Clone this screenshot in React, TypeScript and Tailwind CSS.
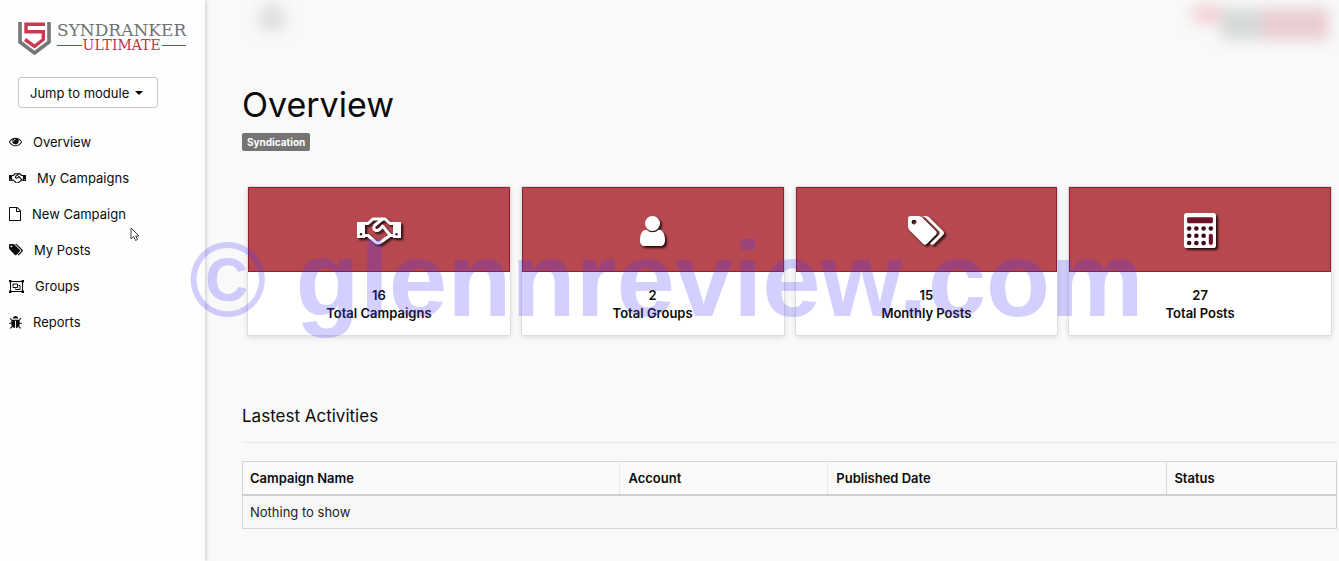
import type { ReactNode } from "react";

type IconProps = { className?: string };

function EyeIcon({ className }: IconProps) {
  return (
    <svg viewBox="0 128 1792 1536" fill="currentColor" className={className} aria-hidden>
      <path d="M1664 960q-152-236-381-353 61 104 61 225 0 185-131.5 316.5t-316.5 131.5-316.5-131.5-131.5-316.5q0-121 61-225-229 117-381 353 133 205 333.5 326.5t434.5 121.5 434.5-121.5 333.5-326.5zm-720-384q0-20-14-34t-34-14q-125 0-214.5 89.5t-89.5 214.5q0 20 14 34t34 14 34-14 14-34q0-86 61-147t147-61q20 0 34-14t14-34zm848 384q0 34-20 69-140 230-376.5 368.5t-499.5 138.5-499.5-139-376.5-368q-20-35-20-69t20-69q140-229 376.5-368t499.5-139 499.5 139 376.5 368q20 35 20 69z" />
    </svg>
  );
}

function HandshakeIcon({ className }: IconProps) {
  return (
    <svg
      viewBox="0 0 44 28"
      fill="none"
      stroke="currentColor"
      strokeWidth="3"
      strokeLinejoin="round"
      strokeLinecap="round"
      className={className}
      aria-hidden
    >
      <path
        d="M0 5h8v16H0zM36 5h8v16h-8zM4 16a1.300 1.300 0 1 0 0 2.600 1.300 1.300 0 0 0 0-2.600zM39.500 16a1.300 1.300 0 1 0 0 2.600 1.300 1.300 0 0 0 0-2.600z"
        fill="currentColor"
        fillRule="evenodd"
        stroke="none"
      />
      <path d="M8 6.500h3L16 2h12l5 4.500h3M8 18.500h3l7.500 6.500q2.500 1.800 5 .2L33 18.500h3" />
      <path d="M25 2.500L17.500 8.500q-2 3.500 1.500 5 3.500.5 6.500-4.500L33 18" />
    </svg>
  );
}

function FileIcon({ className }: IconProps) {
  return (
    <svg viewBox="128 0 1536 1792" fill="currentColor" className={className} aria-hidden>
      <path d="M1596 380q28 28 48 76t20 88v1152q0 40-28 68t-68 28h-1344q-40 0-68-28t-28-68v-1600q0-40 28-68t68-28h896q40 0 88 20t76 48zm-444-244v376h376q-10-29-22-41l-313-313q-12-12-41-22zm384 1528v-1024h-416q-40 0-68-28t-28-68v-416h-768v1536h1280z" />
    </svg>
  );
}

function TagsIcon({ className }: IconProps) {
  return (
    <svg viewBox="0 128 1900 1516" fill="currentColor" className={className} aria-hidden>
      <path d="M448 448q0-53-37.5-90.5t-90.5-37.5-90.5 37.5-37.5 90.5 37.5 90.5 90.5 37.5 90.5-37.5 37.5-90.5zm1067 576q0 53-37 90l-491 492q-39 37-91 37-53 0-90-37l-715-716q-38-37-64.5-101t-26.5-117v-416q0-52 38-90t90-38h416q53 0 117 26.5t102 64.5l715 714q37 39 37 91zm384 0q0 53-37 90l-491 492q-39 37-91 37-36 0-59-14t-53-45l470-470q37-37 37-90 0-52-37-91l-715-714q-38-38-102-64.5t-117-26.5h224q53 0 117 26.5t102 64.5l715 714q37 39 37 91z" />
    </svg>
  );
}

function GroupIcon({ className }: IconProps) {
  return (
    <svg viewBox="0 0 15 13" fill="none" stroke="currentColor" className={className} aria-hidden>
      <path d="M1.500 1.500h12v10h-12z" />
      <path d="M4 4h4.500v3.500H4zM9.500 5.500H11v4H6.500V8.500" />
      <path
        d="M0 0h2.500v2.500H0zM12.500 0H15v2.500h-2.500zM0 10.500h2.500V13H0zM12.500 10.500H15V13h-2.500z"
        fill="currentColor"
        stroke="none"
      />
    </svg>
  );
}

function BugIcon({ className }: IconProps) {
  return (
    <svg viewBox="96 64 1600 1600" fill="currentColor" className={className} aria-hidden>
      <path d="M1696 960q0 26-19 45t-45 19h-224q0 171-67 290l208 209q19 19 19 45t-19 45q-18 19-45 19t-45-19l-198-197q-5 5-15 13t-42 28.500-65 36.500-82 29-97 13v-896h-128v896q-51 0-101.500-13.500t-87-33-66-39-43.500-32.500l-15-14-183 207q-20 21-48 21-24 0-43-16-19-18-20.500-44.500t15.500-46.500l202-227q-58-114-58-274h-224q-26 0-45-19t-19-45 19-45 45-19h224v-294l-173-173q-19-19-19-45t19-45 45-19 45 19l173 173h844l173-173q19-19 45-19t45 19 19 45-19 45l-173 173v294h224q26 0 45 19t19 45zm-480-576h-640q0-133 93.500-226.500t226.500-93.500 226.500 93.500 93.500 226.500z" />
    </svg>
  );
}

function UserIcon({ className }: IconProps) {
  return (
    <svg viewBox="256 128 1280 1536" fill="currentColor" className={className} aria-hidden>
      <path d="M1536 1399q0 109-62.500 187t-150.500 78h-854q-88 0-150.500-78t-62.500-187q0-85 8.500-160.500t31.500-152 58.500-131 94-89 134.500-34.500q131 128 313 128t313-128q76 0 134.500 34.500t94 89 58.500 131 31.500 152 8.500 160.500zm-256-887q0 159-112.500 271.500t-271.500 112.500-271.500-112.500-112.500-271.500 112.500-271.500 271.500-112.500 271.500 112.500 112.500 271.500z" />
    </svg>
  );
}

function CalculatorIcon({ className }: IconProps) {
  const keys = [
    [5, 15], [12, 15], [19, 15], [26, 15],
    [5, 22], [12, 22], [19, 22],
    [5, 29], [12, 29], [19, 29],
  ];
  return (
    <svg viewBox="0 0 31 34" className={className} aria-hidden>
      <rect width="31" height="34" rx="2.500" fill="white" />
      <rect x="3" y="4" width="25" height="6" rx="1" fill="#6d1526" />
      {keys.map(([cx, cy]) => (
        <circle key={`${cx}-${cy}`} cx={cx} cy={cy} r="2.200" fill="#3a0a14" />
      ))}
      <rect x="24" y="20" width="4" height="11" rx="2" fill="#6d1526" />
    </svg>
  );
}

const navItems: { label: string; icon: ReactNode }[] = [
  { label: "Overview", icon: <EyeIcon className="w-[13px]" /> },
  { label: "My Campaigns", icon: <HandshakeIcon className="w-[17px]" /> },
  { label: "New Campaign", icon: <FileIcon className="w-3" /> },
  { label: "My Posts", icon: <TagsIcon className="w-[14px]" /> },
  { label: "Groups", icon: <GroupIcon className="w-[15px]" /> },
  { label: "Reports", icon: <BugIcon className="w-[13px]" /> },
];

const stats: { value: number; label: string; icon: ReactNode }[] = [
  { value: 16, label: "Total Campaigns", icon: <HandshakeIcon className="w-11" /> },
  { value: 2, label: "Total Groups", icon: <UserIcon className="w-[25px]" /> },
  { value: 15, label: "Monthly Posts", icon: <TagsIcon className="w-9" /> },
  { value: 27, label: "Total Posts", icon: <CalculatorIcon className="w-8" /> },
];

function Logo() {
  return (
    <a href="#" className="flex w-fit items-start gap-[6px]" aria-label="Syndranker Ultimate">
      <svg viewBox="0 0 33 33" className="h-[33px] w-[33px] shrink-0" fill="none" aria-hidden>
        <path d="M2 0v20l14.500 11L31 20V0" stroke="#75777a" strokeWidth="3.600" />
        <path
          d="M27 2.300H8v7.500h17.300v7.700l-8.800 6.800L7 17.500"
          stroke="#c43b52"
          strokeWidth="3.400"
        />
      </svg>
      <span className="flex flex-col font-['DejaVu_Serif',serif]">
        <span className="text-[17px] leading-[17px] text-[#707274]">SYNDRANKER</span>
        <span className="flex items-center gap-px text-[14px] leading-[13px] text-[#c0334b]">
          <span className="h-px flex-1 bg-[#c0334b]" />
          ULTIMATE
          <span className="h-px flex-1 bg-[#c0334b]" />
        </span>
      </span>
    </a>
  );
}

function Sidebar() {
  return (
    <aside className="z-10 w-[205px] shrink-0 bg-[#fefefe] shadow-[1px_0_4px_rgba(0,0,0,0.2)]">
      <div className="px-[18px] pt-[22px]">
        <Logo />
        <button
          type="button"
          className="mt-[22px] flex h-[31px] items-center gap-[6px] rounded-[3px] border border-[#c4c4c4] bg-white pr-[14px] pl-[11px] whitespace-nowrap"
        >
          Jump to module
          <span className="border-x-4 border-t-4 border-x-transparent border-t-black" />
        </button>
      </div>
      <nav className="mt-4 px-[9px]">
        {navItems.map((item) => (
          <a key={item.label} href="#" className="flex h-9 items-center gap-[11px]">
            {item.icon}
            {item.label}
          </a>
        ))}
      </nav>
    </aside>
  );
}

function StatCard({ value, label, icon }: { value: number; label: string; icon: ReactNode }) {
  return (
    <div className="overflow-hidden rounded-[2px] border border-[#dedede] bg-white text-center font-semibold shadow-[0_2px_5px_rgba(0,0,0,0.1)]">
      <div className="flex h-[85px] items-center justify-center border border-[#8f1f31] bg-[#b7484f] pt-[2px] text-white">
        <div className="drop-shadow-[2px_2px_1px_rgba(0,0,0,0.8)]">{icon}</div>
      </div>
      <div className="pt-[14px] pb-[13px] leading-[18px]">
        <p>{value}</p>
        <p>{label}</p>
      </div>
    </div>
  );
}

function TopBar() {
  return (
    <div className="flex h-10 items-start justify-between pt-1 pr-2 pl-4" aria-hidden>
      <div className="h-7 w-7 rounded-full bg-[#dedede] blur-[7px]" />
      <div className="flex blur-[7px]">
        <div className="h-5 w-7 bg-[#f3d3d8]" />
        <div className="mt-1 h-8 w-10 bg-[#d6dad9]" />
        <div className="mt-1 h-8 w-[68px] bg-[#e8cdd1]" />
      </div>
    </div>
  );
}

function Activities() {
  return (
    <section className="mt-[68px]">
      <h2 className="text-[17px] leading-6">Lastest Activities</h2>
      <hr className="mt-[14px] border-[#e8e8e8]" />
      <table className="mt-[18px] w-full table-fixed border-collapse border border-[#d4d4d4] text-left">
        <thead>
          <tr className="h-[33px] border-b-2 border-[#d0d0d0] bg-[#fafafa]">
            <th className="w-[34.5%] px-[7px] font-semibold">Campaign Name</th>
            <th className="w-[19%] border-l border-[#eaeaea] px-2 font-semibold">Account</th>
            <th className="w-[31%] border-l border-[#eaeaea] px-2 font-semibold">Published Date</th>
            <th className="border-l border-[#d8d8d8] px-[7px] font-semibold">Status</th>
          </tr>
        </thead>
        <tbody>
          <tr className="h-[34px] bg-[#f7f7f7]">
            <td colSpan={4} className="px-[7px] text-[#222]">
              Nothing to show
            </td>
          </tr>
        </tbody>
      </table>
    </section>
  );
}

export default function App() {
  return (
    <div className="relative flex min-h-screen overflow-hidden bg-[#f9f9f9] font-[Inter,sans-serif] text-[13px] leading-5 text-[#0c0c0c]">
      <Sidebar />
      <main className="min-w-0 flex-1 pr-[2px] pb-8 pl-[37px]">
        <TopBar />
        <h1 className="mt-[45px] text-[34px] leading-10">Overview</h1>
        <span className="mt-2 block w-fit rounded-[2px] bg-[#747474] px-[5px] text-[10px] leading-[18px] font-bold text-white">
          Syndication
        </span>
        <div className="mt-[35px] grid grid-cols-4 gap-[10px] px-[5px]">
          {stats.map((stat) => (
            <StatCard key={stat.label} {...stat} />
          ))}
        </div>
        <Activities />
      </main>

      <div className="pointer-events-none absolute top-[220px] left-[189px] z-20 font-['Liberation_Sans',sans-serif] text-[105px] leading-[120px] font-bold whitespace-nowrap text-[rgba(70,60,255,0.24)]">
        © glennreview.com
      </div>
      <svg
        viewBox="0 0 10 14"
        className="pointer-events-none absolute top-[227px] left-[130px] z-20 w-[10px]"
        fill="white"
        stroke="#444"
        aria-hidden
      >
        <path d="M1 1v11l2.500-2.500L5.500 13.500l2-1L5.700 9H9z" />
      </svg>
    </div>
  );
}
